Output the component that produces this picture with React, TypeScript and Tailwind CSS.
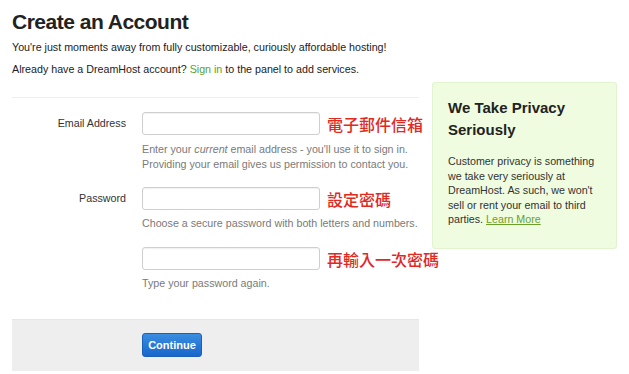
import { ReactNode } from 'react'

function Field({ label, hint, note }: { label?: string; hint: string; note: ReactNode }) {
  return (
    <div>
      <div className="flex items-center h-[23px]">
        <div className="w-[114px] shrink-0 text-right text-[10.7px] text-[#333]">{label}</div>
        <input
          type="text"
          className="ml-[16px] w-[178px] shrink-0 h-[23px] rounded-[3px] border border-[#cfcfcf] bg-white shadow-[inset_0_1px_1px_rgba(0,0,0,0.06)] outline-none"
        />
        <span
          className="ml-[7px] whitespace-nowrap text-[16px] font-medium leading-none text-[#e0291f]"
          style={{ fontFamily: '"Noto Sans CJK TC", sans-serif' }}
        >
          {hint}
        </span>
      </div>
      <div className="ml-[130px] whitespace-nowrap text-[10.7px] leading-[15px] text-[#7a7a7a]">{note}</div>
    </div>
  )
}

export default function App() {
  return (
    <div className="w-[629px] h-[374px] bg-white overflow-hidden px-3 text-[#222]" style={{ fontFamily: '"Liberation Sans", Arial, sans-serif' }}>
      <h1 className="pt-[9px] text-[21px] font-bold leading-[26px] tracking-[-0.5px] text-[#222]">Create an Account</h1>
      <p className="mt-[5px] text-[10.7px] leading-[14px] text-[#222]">
        You're just moments away from fully customizable, curiously affordable hosting!
      </p>
      <p className="mt-[8px] text-[10.7px] leading-[14px] text-[#222]">
        Already have a DreamHost account? <a className="text-[#5c9f1e]">Sign in</a> to the panel to add services.
      </p>

      <div className="flex mt-[6px]">
        <div className="w-[407px] shrink-0">
          <div className="mt-[15px] border-t border-[#efefef]" />
          <div className="mt-[14px]">
            <Field
              label="Email Address"
              hint="電子郵件信箱"
              note={
                <div className="mt-[7px]">
                  Enter your <i>current</i> email address - you'll use it to sign in.
                  <br />
                  Providing your email gives us permission to contact you.
                </div>
              }
            />
          </div>
          <div className="mt-[15px]">
            <Field
              label="Password"
              hint="設定密碼"
              note={<div className="mt-[6px]">Choose a secure password with both letters and numbers.</div>}
            />
          </div>
          <div className="mt-[16px]">
            <Field hint="再輸入一次密碼" note={<div className="mt-[6px]">Type your password again.</div>} />
          </div>
          <div className="mt-[28px] h-[52px] bg-[#eeeeee] border-t border-[#e6e6e6] pt-[12px] pl-[130px]">
            <button className="w-[60px] h-[24px] rounded-[3px] border border-[#1c5fb8] bg-gradient-to-b from-[#3a8de0] to-[#1666cc] text-white text-[11px] font-bold">
              Continue
            </button>
          </div>
        </div>

        <div className="ml-[13px] w-[185px] h-[167px] rounded-[3px] bg-[#effcdf] border border-[#e2f3cf] px-[15px] pt-[14px]">
          <h2 className="text-[15px] font-bold leading-[22px] text-[#222]">
            We Take Privacy
            <br />
            Seriously
          </h2>
          <p className="mt-[13px] text-[10.7px] leading-[14.5px] text-[#333]">
            Customer privacy is something we take very seriously at DreamHost. As such, we won't sell or rent your email to third parties.{' '}
            <a className="text-[#6b9f2a] underline">Learn More</a>
          </p>
        </div>
      </div>
    </div>
  )
}
